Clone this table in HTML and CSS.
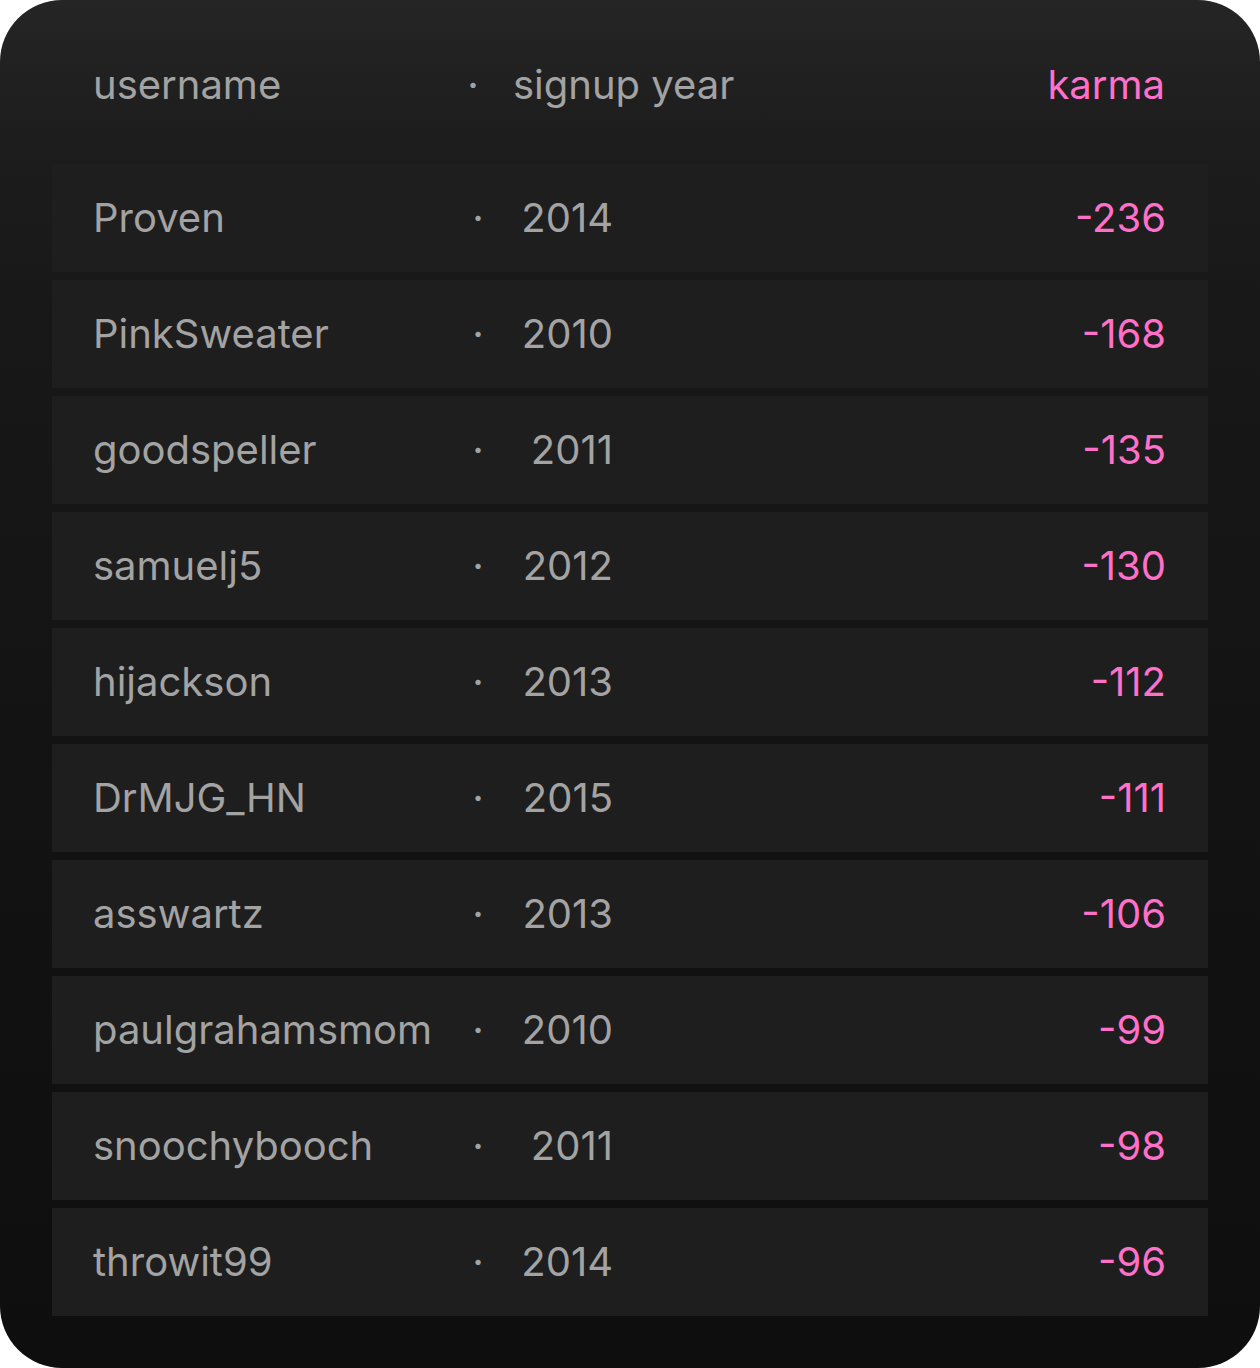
FILE: index.html
```html
<!DOCTYPE html>
<html>
<head>
<meta charset="utf-8">
<link rel="stylesheet" href="styles.css">
</head>
<body>
<div class="card">
  <div class="head">
    <span class="h-name">username</span>
    <span class="h-dot">·</span>
    <span class="h-year">signup year</span>
    <span class="h-karma">karma</span>
  </div>
  <div class="rows">
    <div class="row"><span class="name">Proven</span><span class="dot">·</span><span class="year">2014</span><span class="karma">-236</span></div>
    <div class="row"><span class="name">PinkSweater</span><span class="dot">·</span><span class="year">2010</span><span class="karma">-168</span></div>
    <div class="row"><span class="name">goodspeller</span><span class="dot">·</span><span class="year">2011</span><span class="karma">-135</span></div>
    <div class="row"><span class="name">samuelj5</span><span class="dot">·</span><span class="year">2012</span><span class="karma">-130</span></div>
    <div class="row"><span class="name">hijackson</span><span class="dot">·</span><span class="year">2013</span><span class="karma">-112</span></div>
    <div class="row"><span class="name">DrMJG_HN</span><span class="dot">·</span><span class="year">2015</span><span class="karma">-111</span></div>
    <div class="row"><span class="name">asswartz</span><span class="dot">·</span><span class="year">2013</span><span class="karma">-106</span></div>
    <div class="row"><span class="name">paulgrahamsmom</span><span class="dot">·</span><span class="year">2010</span><span class="karma">-99</span></div>
    <div class="row"><span class="name">snoochybooch</span><span class="dot">·</span><span class="year">2011</span><span class="karma">-98</span></div>
    <div class="row"><span class="name">throwit99</span><span class="dot">·</span><span class="year">2014</span><span class="karma">-96</span></div>
  </div>
</div>
</body>
</html>
```
FILE: styles.css
```css
html, body {
  margin: 0;
  padding: 0;
  background: #ffffff;
}
body {
  width: 1260px;
  height: 1368px;
  font-family: Inter, "Liberation Sans", sans-serif;
}
.card {
  box-sizing: border-box;
  width: 1260px;
  height: 1368px;
  border-radius: 62px;
  background: linear-gradient(180deg, #252525 0%, #1d1d1d 10%, #181818 22%, #131313 55%, #0e0e0e 100%);
  padding: 31px 52px 52px;
  display: flex;
  flex-direction: column;
  overflow: hidden;
}
.head {
  height: 108px;
  display: flex;
  align-items: center;
  padding: 0 43px 0 41px;
  font-size: 40px;
  line-height: 48px;
  color: #a3a3a3;
  margin-bottom: 25px;
}
.h-name {
  width: 365px;
  flex: none;
}
.h-dot, .dot {
  width: 30px;
  flex: none;
  text-align: center;
  font-size: 40px;
  color: #a3a3a3;
}
.h-year {
  padding-left: 25px;
  flex: none;
}
.h-karma {
  flex: 1;
  text-align: right;
  color: #ff70c8;
}
.rows {
  display: flex;
  flex-direction: column;
  gap: 8px;
}
.row {
  height: 108px;
  display: flex;
  align-items: center;
  padding: 0 42px 0 41px;
  background: #1e1e1e;
  font-size: 40px;
  line-height: 48px;
  color: #a3a3a3;
}
.name {
  width: 370px;
  flex: none;
  white-space: nowrap;
}
.year {
  width: 120px;
  flex: none;
  text-align: right;
}
.karma {
  flex: 1;
  text-align: right;
  color: #ff70c8;
}
```
